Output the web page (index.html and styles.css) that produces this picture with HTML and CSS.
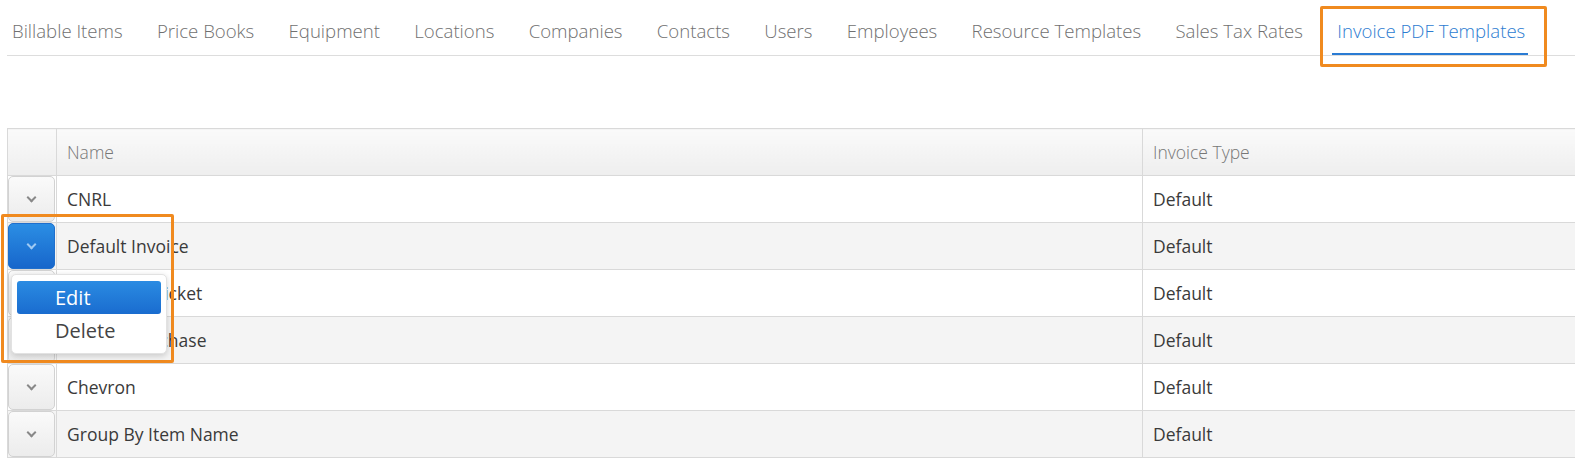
FILE: index.html
```html
<!DOCTYPE html>
<html lang="en">

<head>
    <meta charset="UTF-8">
    <meta name="viewport" content="width=device-width, initial-scale=1.0">
    <title>Invoice PDF Templates</title>
    <link rel="stylesheet" href="styles.css">
</head>

<body>
    <div class="page">
        <!-- Settings tabs -->
        <ul class="tabs">
            <li><a href="#">Billable Items</a></li>
            <li><a href="#">Price Books</a></li>
            <li><a href="#">Equipment</a></li>
            <li><a href="#">Locations</a></li>
            <li><a href="#">Companies</a></li>
            <li><a href="#">Contacts</a></li>
            <li><a href="#">Users</a></li>
            <li><a href="#">Employees</a></li>
            <li><a href="#">Resource Templates</a></li>
            <li><a href="#">Sales Tax Rates</a></li>
            <li class="active"><a href="#">Invoice PDF Templates</a></li>
        </ul>

        <!-- Templates grid -->
        <table class="grid">
            <colgroup>
                <col class="col-actions">
                <col class="col-name">
                <col>
            </colgroup>
            <thead>
                <tr>
                    <th></th>
                    <th>Name</th>
                    <th>Invoice Type</th>
                </tr>
            </thead>
            <tbody>
                <tr>
                    <td class="actions"><button class="menu-btn"><span class="chev"></span></button></td>
                    <td>CNRL</td>
                    <td>Default</td>
                </tr>
                <tr>
                    <td class="actions">
                        <button class="menu-btn open"><span class="chev"></span></button>
                        <ul class="menu">
                            <li class="selected">Edit</li>
                            <li>Delete</li>
                        </ul>
                    </td>
                    <td>Default Invoice</td>
                    <td>Default</td>
                </tr>
                <tr>
                    <td class="actions"><button class="menu-btn"><span class="chev"></span></button></td>
                    <td>Daily Field Ticket</td>
                    <td>Default</td>
                </tr>
                <tr>
                    <td class="actions"><button class="menu-btn"><span class="chev"></span></button></td>
                    <td>Default Purchase</td>
                    <td>Default</td>
                </tr>
                <tr>
                    <td class="actions"><button class="menu-btn"><span class="chev"></span></button></td>
                    <td>Chevron</td>
                    <td>Default</td>
                </tr>
                <tr>
                    <td class="actions"><button class="menu-btn"><span class="chev"></span></button></td>
                    <td>Group By Item Name</td>
                    <td>Default</td>
                </tr>
            </tbody>
        </table>

        <!-- highlight frames -->
        <div class="callout callout-tab"></div>
        <div class="callout callout-menu"></div>
    </div>
</body>

</html>
```

FILE: styles.css
```css
/* Base styles */
html,
body {
    margin: 0;
    padding: 0;
    overflow: hidden;
}

body {
    font-family: "Open Sans", Arial, sans-serif;
    background-color: #fff;
    color: #3a3a3a;
}

.page {
    position: relative;
    padding-left: 7px;
}

/* Tabs */
.tabs {
    list-style: none;
    margin: 0;
    padding: 0;
    display: flex;
    gap: 24.3px;
    border-bottom: 1px solid #ddd;
}

.tabs li a {
    display: block;
    padding: 18px 5px 9px;
    line-height: 26px;
    font-size: 18.6px;
    font-weight: 300;
    color: #707070;
    text-decoration: none;
    border-bottom: 2px solid transparent;
}

.tabs li.active a {
    padding-right: 3px;
    color: #2d7cd1;
    border-bottom-color: #2a7bd3;
}

/* Grid */
.grid {
    margin-top: 72px;
    width: 1640px;
    border-collapse: collapse;
    table-layout: fixed;
    font-size: 17.5px;
}

.col-actions {
    width: 49px;
}

.col-name {
    width: 1086px;
}

.grid th,
.grid td {
    height: 46px;
    padding: 0 10px;
    border: 1px solid #d9d9d9;
    text-align: left;
    white-space: nowrap;
}

.grid th {
    font-weight: 300;
    color: #777;
    background: linear-gradient(#fafafa, #eeeeee);
}

.grid tbody tr:nth-child(even) td {
    background-color: #f4f4f4;
}

.grid td.actions {
    position: relative;
    padding: 0;
}

/* Row menu button */
.menu-btn {
    display: flex;
    align-items: center;
    justify-content: center;
    width: 47px;
    height: 46px;
    margin: 0;
    padding: 0;
    border: 1px solid #d2d2d2;
    border-radius: 5px;
    background: linear-gradient(#fafafa, #ececec);
    cursor: pointer;
}

.menu-btn .chev {
    width: 5px;
    height: 5px;
    margin-top: -4px;
    border-right: 2px solid #888;
    border-bottom: 2px solid #888;
    transform: rotate(45deg);
}

.menu-btn.open {
    border-color: #1f6fcd;
    background: linear-gradient(#2b8ee4, #1766cb);
}

.menu-btn.open .chev {
    border-color: #9fcaf3;
}

/* Dropdown */
.menu {
    position: absolute;
    top: 51px;
    left: 3px;
    z-index: 2;
    width: 144px;
    margin: 0;
    padding: 6px 5px;
    list-style: none;
    background-color: #fff;
    border: 1px solid #e2e2e2;
    border-radius: 5px;
    box-shadow: 0 2px 6px rgba(0, 0, 0, 0.18);
}

.menu li {
    height: 33px;
    line-height: 33px;
    padding-left: 38px;
    font-size: 20px;
    color: #444;
    border-radius: 3px;
}

.menu li.selected {
    color: #fff;
    background: linear-gradient(#2a8be2, #1a6ccf);
}

/* Orange highlight frames */
.callout {
    position: absolute;
    border: 3px solid #f08a1f;
    border-radius: 2px;
    pointer-events: none;
}

.callout-tab {
    left: 1320px;
    top: 6px;
    width: 221px;
    height: 55px;
}

.callout-menu {
    left: 1px;
    top: 214px;
    width: 167px;
    height: 143px;
}
```
